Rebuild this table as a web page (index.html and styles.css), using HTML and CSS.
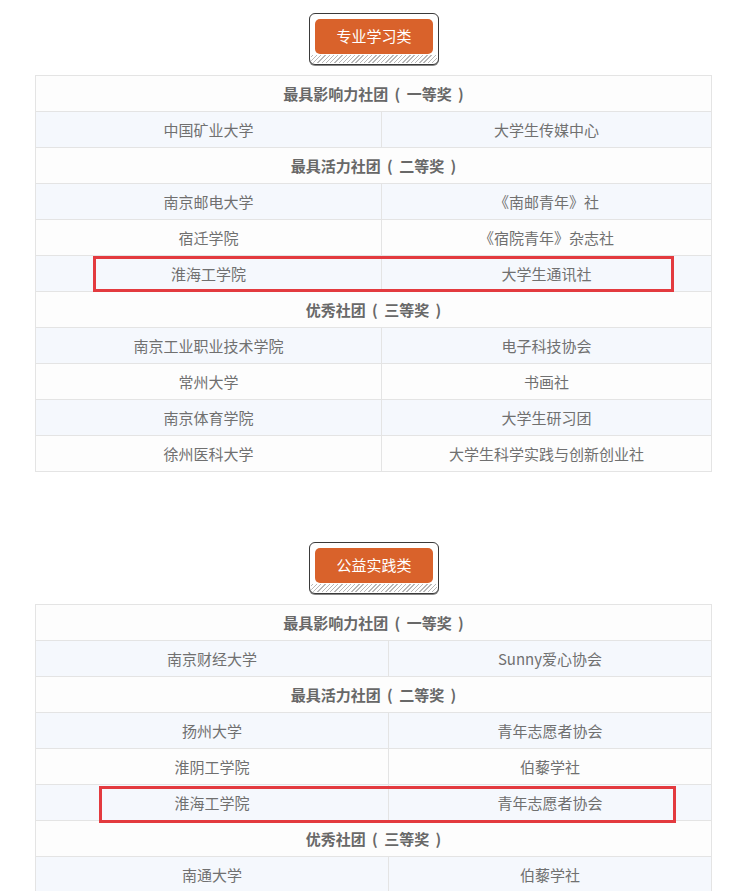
FILE: index.html
```html
<!DOCTYPE html>
<html lang="zh-CN">
<head>
<meta charset="utf-8">
<link rel="stylesheet" href="styles.css">
</head>
<body>
<div class="page">
  <section class="block">
    <div class="badge"><div class="badge-btn">专业学习类</div><div class="badge-hatch"></div></div>
    <div class="table-wrap">
      <table class="awards t1">
        <colgroup><col class="c1"><col></colgroup>
        <tr class="head"><td colspan="2">最具影响力社团 ( 一等奖 )</td></tr>
        <tr><td>中国矿业大学</td><td>大学生传媒中心</td></tr>
        <tr class="head"><td colspan="2">最具活力社团 ( 二等奖 )</td></tr>
        <tr><td>南京邮电大学</td><td>《南邮青年》社</td></tr>
        <tr><td>宿迁学院</td><td>《宿院青年》杂志社</td></tr>
        <tr><td>淮海工学院</td><td>大学生通讯社</td></tr>
        <tr class="head"><td colspan="2">优秀社团 ( 三等奖 )</td></tr>
        <tr><td>南京工业职业技术学院</td><td>电子科技协会</td></tr>
        <tr><td>常州大学</td><td>书画社</td></tr>
        <tr><td>南京体育学院</td><td>大学生研习团</td></tr>
        <tr><td>徐州医科大学</td><td>大学生科学实践与创新创业社</td></tr>
      </table>
      <div class="mark mark1"></div>
    </div>
  </section>
  <section class="block second">
    <div class="badge"><div class="badge-btn">公益实践类</div><div class="badge-hatch"></div></div>
    <div class="table-wrap">
      <table class="awards t2">
        <colgroup><col class="c1"><col></colgroup>
        <tr class="head"><td colspan="2">最具影响力社团 ( 一等奖 )</td></tr>
        <tr><td>南京财经大学</td><td>Sunny爱心协会</td></tr>
        <tr class="head"><td colspan="2">最具活力社团 ( 二等奖 )</td></tr>
        <tr><td>扬州大学</td><td>青年志愿者协会</td></tr>
        <tr><td>淮阴工学院</td><td>伯藜学社</td></tr>
        <tr><td>淮海工学院</td><td>青年志愿者协会</td></tr>
        <tr class="head"><td colspan="2">优秀社团 ( 三等奖 )</td></tr>
        <tr><td>南通大学</td><td>伯藜学社</td></tr>
      </table>
      <div class="mark mark2"></div>
    </div>
  </section>
</div>
</body>
</html>
```

FILE: styles.css
```css
html, body {
  margin: 0;
  padding: 0;
  background: #fff;
}
body {
  font-family: "Noto Sans CJK SC", "Noto Sans", sans-serif;
  color: #666;
}
.page {
  padding: 13px 33px 0 35px;
}
.block {
  display: flex;
  flex-direction: column;
  align-items: stretch;
}
.block.second {
  margin-top: 70px;
}
.badge {
  align-self: center;
  width: 118px;
  height: 44px;
  padding: 5px 5px 1px 5px;
  border: 1px solid #3a3a3a;
  border-radius: 6px;
  box-shadow: 0 1px 0 #888;
  background: #fff;
  display: flex;
  flex-direction: column;
  gap: 1px;
  margin-bottom: 10px;
  margin-left: 2px;
}
.badge-btn {
  height: 35px;
  line-height: 34px;
  background: #d9622b;
  border-radius: 5px;
  color: #fff;
  font-size: 15px;
  text-align: center;
}
.badge-hatch {
  flex: 1;
  margin: 0 -4px;
  border-radius: 0 0 4px 4px;
  background: repeating-linear-gradient(-45deg, #b8b8b8 0 1px, #fff 1px 3px);
}
.table-wrap {
  position: relative;
}
.awards {
  width: 677px;
  border-collapse: collapse;
  table-layout: fixed;
  font-size: 15px;
}
.t1 .c1 { width: 346px; }
.t2 .c1 { width: 353px; }
.awards td {
  height: 35px;
  padding: 0;
  text-align: center;
  border: 1px solid #e4e4e4;
  color: #707070;
  background: #fdfdfd;
  vertical-align: middle;
}
.awards tr:nth-child(even) td {
  background: #f5f8fd;
}
.awards tr.head td {
  font-weight: bold;
  color: #686868;
  background: #fdfdfd;
  word-spacing: 3px;
}
.mark {
  position: absolute;
  border: 3px solid #e33a3f;
  box-sizing: border-box;
}
.mark1 {
  left: 58px;
  top: 181px;
  width: 581px;
  height: 36px;
}
.mark2 {
  left: 64px;
  top: 182px;
  width: 577px;
  height: 37px;
}
```
